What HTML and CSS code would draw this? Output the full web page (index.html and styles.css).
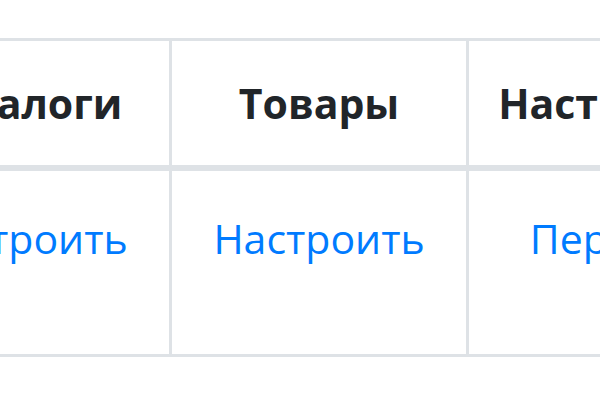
FILE: index.html
```html
<!DOCTYPE html>
<html lang="ru">
<head>
  <meta charset="UTF-8">
  <title>Настройки</title>
  <link rel="stylesheet" href="styles.css">
</head>
<body>

<div class="frame">
  <table class="settings-table">
    <thead>
      <tr>
        <th>Каталоги</th>
        <th>Товары</th>
        <th>Настройки</th>
      </tr>
    </thead>
    <tbody>
      <tr>
        <td><a href="#">Настроить</a></td>
        <td><a href="#">Настроить</a></td>
        <td><a href="#">Перейти</a></td>
      </tr>
    </tbody>
  </table>
</div>

</body>
</html>
```

FILE: styles.css
```css
body {
  margin: 0;
  background-color: #ffffff;
  font-family: "Open Sans", "Noto Sans", sans-serif;
  color: #212529;
}

.frame {
  width: 600px;
  height: 400px;
  padding-top: 38px;
  overflow: hidden;
  box-sizing: border-box;
}

.settings-table {
  border-collapse: collapse;
  table-layout: fixed;
  margin-left: -128px;
  width: 894px;
}

.settings-table th,
.settings-table td {
  border: 3px solid #dee2e6;
  text-align: center;
  padding: 0;
}

.settings-table th {
  height: 124px;
  border-bottom-width: 6px;
  font-size: 41px;
  font-weight: 700;
  vertical-align: middle;
}

.settings-table td {
  height: 149px;
  vertical-align: top;
  padding-top: 34px;
  font-size: 41px;
  line-height: 67px;
}

.settings-table a {
  color: #007bff;
  text-decoration: none;
}
```
